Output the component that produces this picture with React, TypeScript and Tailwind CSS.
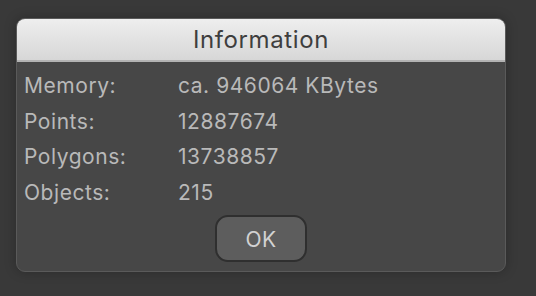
import React from 'react';

interface Row {
  label: string;
  value: string;
}

const rows: Row[] = [
  { label: 'Memory:', value: 'ca. 946064 KBytes' },
  { label: 'Points:', value: '12887674' },
  { label: 'Polygons:', value: '13738857' },
  { label: 'Objects:', value: '215' },
];

const App: React.FC = () => {
  return (
    <div
      className="w-[536px] h-[296px] bg-[#393939] pt-[18px] pl-[16px]"
      style={{ fontFamily: 'Inter, "Noto Sans", "Liberation Sans", sans-serif' }}
    >
      {/* Dialog */}
      <div className="w-[490px] h-[254px] flex flex-col rounded-[9px] border border-[#5a5a5a] bg-[#474747] overflow-hidden shadow-[0_0_12px_rgba(0,0,0,0.25)]">
        {/* Title bar */}
        <div className="h-[43px] shrink-0 flex items-center justify-center bg-gradient-to-b from-[#eeeeee] to-[#d7d7d7] border-b-2 border-[#b3b3b3]">
          <span className="text-[24px] leading-none tracking-[0.6px] text-[#3e3e3e] mt-[1px]">Information</span>
        </div>

        {/* Info rows */}
        <div className="flex flex-col pl-[7px] pt-[6px]">
          {rows.map((row) => (
            <div key={row.label} className="flex h-[35.5px] items-center text-[21px] tracking-[0.55px] text-[#b9b9b9]">
              <span className="w-[154px]">{row.label}</span>
              <span>{row.value}</span>
            </div>
          ))}
        </div>

        {/* OK button */}
        <div className="flex justify-center mt-[5px]">
          <button className="w-[92px] h-[47px] pt-[2px] rounded-[13px] border-2 border-[#2f2f2f] bg-[#5d5d5d] text-[21px] tracking-[0.5px] text-[#d2d2d2]">
            OK
          </button>
        </div>
      </div>
    </div>
  );
};

export default App;
